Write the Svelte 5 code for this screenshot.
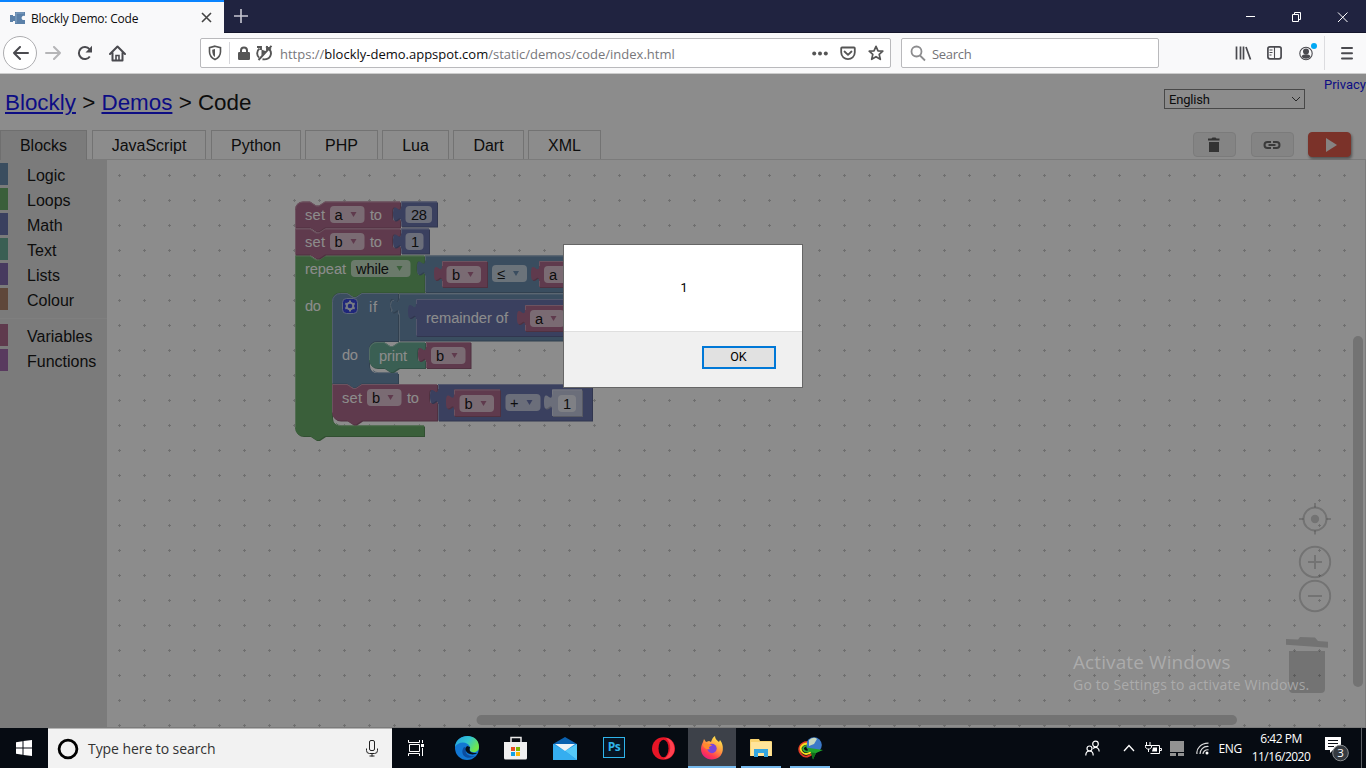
<script>
  const C = { logic: '#5b80a5', loops: '#5ba55b', math: '#5b67a5', text: '#5ba58c', vars: '#a55b80', shadow: '#bdc2db' };
  const dark = { logic: '#496684', loops: '#498449', math: '#495284', text: '#498470', vars: '#844966', shadow: '#979baf' };
  const light = { logic: '#8ca6c0', loops: '#8cc08c', math: '#8c95c0', text: '#8cc0ae', vars: '#c08ca6', shadow: '#d1d4e6' };

  const categories = [
    ['Logic', '#5b80a5'], ['Loops', '#5ba55b'], ['Math', '#5b67a5'], ['Text', '#5ba58c'],
    ['Lists', '#745ba5'], ['Colour', '#a5745b'], null, ['Variables', '#a55b80'], ['Functions', '#995ba5']
  ];
  const tabs = [['Blocks', 87], ['JavaScript', 114], ['Python', 90], ['PHP', 73], ['Lua', 67], ['Dart', 71], ['XML', 73]];
  const tabGaps = [0, 5, 5, 4, 4, 4, 4];

  const notch = 'l6,4 3,0 6,-4';
  const back = 'l-6,4 -3,0 -6,-4';
  const socket = 'v5c0,10 -8,-8 -8,7.5s8,-2.5 8,7.5';
  const plug = 'V{y}c0,-10 -8,8 -8,-7.5s8,2.5 8,-7.5';

  // Value block with an output plug on its left side.
  const value = (k, x, y, r, b) => ({
    k, d: `M${x},${y}H${r}V${b}H${x}${plug.replace('{y}', y + 20)}Z`,
    l: `M${x + .5},${b - .5}V${y + 20}M${x + .5},${y + 5}V${y + .5}H${r}`
  });
  // Statement block with notches above and below and one value socket.
  const statement = (k, x, y, r, b, round, roundB) => ({
    k, d: `M${x},${y + (round ? 8 : 0)}${round ? 'a8,8 0 0 1 8,-8' : ''}H${x + 15}${notch}H${r}${socket}V${b}H${x + 30}${back}H${x + (roundB ? 8 : 0)}${roundB ? 'a8,8 0 0 1 -8,-8' : ''}Z`,
    l: `M${x + .5},${b - (roundB ? 8 : 0)}V${y + (round ? 8 : .5)}${round ? 'a7.5,7.5 0 0 1 7.5,-7.5' : ''}H${x + 15}${notch}H${r}`
  });

  const blocks = [
    { k: 'loops', d: `M295,256H310${notch}H424.5${socket}V293H362${back}H340a8,8 0 0 0 -8,8V418a8,8 0 0 0 8,8H424V436.5H325${back}H303a8,8 0 0 1 -8,-8Z`,
      l: 'M295.5,428V256.5H310l6,4 3,0 6,-4H424M336,424q2,2 5,2.2H424' },
    statement('vars', 295, 202, 400, 228, true, false),
    value('math', 401, 202, 437, 227),
    statement('vars', 295, 229, 400, 255, false, false),
    value('math', 401, 229, 429, 254),
    value('logic', 425, 256, 640, 292.5),
    value('vars', 442, 261.5, 487, 287.5),
    value('vars', 539, 261.5, 585, 287.5),
    { k: 'logic', d: `M332,301.5a8,8 0 0 1 8,-8H347${notch}H398${socket}V341.5H377a8,8 0 0 0 -8,8V365.5a8,8 0 0 0 8,8H398V384H362${back}H332Z`,
      l: 'M332.5,384V302a8,8 0 0 1 8,-8H347l6,4 3,0 6,-4H398M373,371q2,2 5,2.2H398' },
    value('logic', 399, 294, 700, 341),
    value('math', 416, 299.5, 680, 336.5),
    value('vars', 525, 305.5, 571, 331.5),
    statement('text', 369, 342.5, 425, 368.5, true, true),
    value('vars', 426, 342.5, 470.5, 368.5),
    statement('vars', 332, 384.5, 437, 421, false, true),
    value('math', 438, 384.5, 592, 421),
    value('vars', 454, 390, 500, 416.5),
    value('shadow', 552, 390, 582, 416.5)
  ];

  const labels = [
    ['set', 305, 220, 20], ['to', 370, 220, 12], ['set', 305, 247, 20], ['to', 370, 247, 12],
    ['repeat', 305, 274, 41], ['do', 305, 311, 16], ['if', 369, 312, 8], ['remainder of', 426, 323, 82],
    ['do', 342, 360, 16], ['print', 379, 361, 28], ['set', 342, 403, 20], ['to', 407, 403, 12]
  ];
  // text, field x, y, width, text x, text width, arrow x, arrow colour
  const fields = [
    ['a', 330, 206, 34.5, 334.5, 8, 353.5, 'vars'], ['28', 405.5, 206, 26.5, 411, 16],
    ['b', 330, 233, 34.5, 334.5, 8, 353.5, 'vars'], ['1', 405.5, 233, 18, 411, 8],
    ['while', 351, 260, 59.5, 356, 33, 399.5, 'loops'],
    ['b', 446.5, 266, 34.5, 452, 8, 470.5, 'vars'], ['≤', 492, 265, 35, 497, 8, 516, 'logic'], ['a', 544, 266, 34.5, 549, 8, 568, 'vars'],
    ['a', 530, 310, 34.5, 535, 8, 553.5, 'vars'],
    ['b', 431, 347, 34.5, 436, 8, 454.5, 'vars'],
    ['b', 367, 389, 34.5, 372, 8, 390.5, 'vars'],
    ['b', 459.5, 395, 34.5, 464.5, 8, 483.5, 'vars'], ['+', 505.5, 394, 35, 510, 9, 529.5, 'math'], ['1', 558, 395, 18, 563, 8]
  ];
</script>

<div class="screen">
  <div class="titlebar">
    <div class="tab">
      <svg width="17" height="16" viewBox="0 0 17 16"><path d="M6 2h10v4c-4-2-5 5 0 4v4H6v-3H4v1H1V5h3v1h2z" fill="#5b80a8"/><path d="M7 3h8M7 3v10" stroke="#86a5c5"/></svg>
      <span>Blockly Demo: Code</span>
      <svg class="close" width="11" height="11" viewBox="0 0 11 11"><path d="M1 1l9 9M10 1l-9 9" stroke="#444" stroke-width="1.6"/></svg>
    </div>
    <svg class="plus" width="14" height="14" viewBox="0 0 14 14"><path d="M7 0v14M0 7h14" stroke="#c7c8d2" stroke-width="1.6"/></svg>
    <svg class="wincontrols" width="106" height="12" viewBox="0 0 106 12" fill="none" stroke="#fff">
      <path d="M1 4.5h9M47.500 2.500h6v7h-6zM49.500 2.500v-2h6v7h-2M93 .5l9.500 9.500M102.500 .5l-9.500 9.500" />
    </svg>
  </div>

  <div class="navbar">
    <div class="backbtn"><svg width="17" height="14" viewBox="0 0 17 14" fill="none" stroke="#4a4a4f" stroke-width="2"><path d="M16 7H2M8 1L2 7l6 6" stroke-linejoin="round" stroke-linecap="round"/></svg></div>
    <svg class="fwd" width="17" height="14" viewBox="0 0 17 14" fill="none" stroke="#b5b5b7" stroke-width="2"><path d="M1 7h14M9 1l6 6-6 6" stroke-linejoin="round" stroke-linecap="round"/></svg>
    <svg class="reload" width="16" height="16" viewBox="0 0 16 16" fill="none" stroke="#4a4a4f" stroke-width="2"><path d="M12.8 11.5A6 6 0 1 1 12.5 4.2"/><path d="M15 .8v6.7H8.5z" fill="#4a4a4f" stroke="none"/></svg>
    <svg class="home" width="17" height="17" viewBox="0 0 17 17" fill="none" stroke="#4a4a4f" stroke-width="2"><path d="M1 9l7.5-7.5L16 9M3.5 8v7.5h10V8" stroke-linejoin="round" stroke-linecap="round"/><path d="M7 15v-4.500h3V15" stroke-width="1.600"/></svg>

    <div class="urlbar">
      <svg width="14" height="16" viewBox="0 0 14 16"><path d="M7 1.200l5.500 1.500v4c0 4-2.200 6.200-5.500 7.800C3.700 12.900 1.500 10.700 1.500 6.700v-4z" fill="none" stroke="#555" stroke-width="1.600"/><path d="M7 4v8C5 10.800 4.200 9 4.200 4.800z" fill="#555"/></svg>
      <i class="sep"></i>
      <svg width="12" height="15" viewBox="0 0 12 15"><path d="M3 7V4.500a3 3 0 0 1 6 0V7" fill="none" stroke="#555" stroke-width="2"/><rect y="6" width="12" height="8" rx="1.200" fill="#555"/></svg>
      <svg class="blocked" width="17" height="16" viewBox="0 0 17 16" fill="none" stroke="#555" stroke-width="1.900"><path d="M1 2h4v3M3.500 3.500C0 6.500 1 11 3 12.500M6.500 14.200c8 1.300 10.500-6 6.500-10.200M15.500.8L2.500 15M10 1.500l5 3M11 5V1"/><path d="M5.500 4.500v6l5-4z" fill="#555" stroke="none"/></svg>
      <span class="url">https://<b>blockly-demo.appspot.com</b>/static/demos/code/index.html</span>
      <svg class="dots" width="16" height="5" viewBox="0 0 16 5" fill="#555"><circle cx="2.200" cy="2.500" r="2"/><circle cx="8" cy="2.500" r="2"/><circle cx="13.800" cy="2.500" r="2"/></svg>
      <svg width="16" height="15" viewBox="0 0 16 15" fill="none" stroke="#555" stroke-width="1.800"><path d="M2 1.500h12q.8 0 .8.800v4c0 9-13.600 9-13.600 0v-4q0-.8.800-.8zM4.500 5.500L8 8.800l3.500-3.300" stroke-linecap="round" stroke-linejoin="round"/></svg>
      <svg width="16" height="16" viewBox="0 0 16 16" fill="none" stroke="#555" stroke-width="1.700"><path d="M8 1.300l2 4.500 4.800.4-3.600 3.200 1.100 4.900L8 11.700l-4.300 2.600 1.100-4.900L1.200 6.200 6 5.800z" stroke-linejoin="round"/></svg>
    </div>

    <div class="searchbar">
      <svg width="16" height="17" viewBox="0 0 16 17" fill="none" stroke="#8c8c8e" stroke-width="1.800"><circle cx="6.500" cy="6.500" r="5"/><path d="M10 10.500l5 5"/></svg>
      <span>Search</span>
    </div>

    <svg class="tools" width="122" height="34" viewBox="0 0 122 34" fill="none" stroke="#4a4a4f" stroke-width="1.700">
      <path d="M1.500 10.500v13M5.500 10.500v13M8.500 10.500v13M11 11l4.500 12.500"/>
      <rect x="32.900" y="10.800" width="13.200" height="12" rx="2"/><path d="M39.500 11v12M34.500 14h3M34.500 16.500h3M34.500 19h2" stroke-width="1.100"/>
      <circle cx="71" cy="17.500" r="6.200" stroke-width="1.100"/><circle cx="71" cy="15.500" r="3" fill="#4a4a4f" stroke="none"/><path d="M66.500 20.500c1-3 8-3 9 0-2 3-7 3-9 0z" fill="#4a4a4f" stroke="none"/>
      <circle cx="79" cy="10" r="3" fill="#00a8f4" stroke="none"/>
      <path d="M89.500 0v34" stroke="#dcdcdf" stroke-width="1"/>
      <path d="M107 12h10M107 17.300h10M107 22.600h10" stroke-width="2" stroke-linecap="round"/>
    </svg>
  </div>

  <div class="page">
    <header>
      <h1><a href="#blockly">Blockly</a> &gt; <a href="#demos">Demos</a> &gt; <span>Code</span></h1>
      <div class="select"><span>English</span><svg width="10" height="7" viewBox="0 0 10 7"><path d="M1 1l4 4 4-4" fill="none" stroke="#333"/></svg></div>
      <a class="privacy" href="#privacy">Privacy</a>
    </header>

    <div class="tabrow">
      {#each tabs as [name, w], i}
        <div class="codetab" class:on={i === 0} style:width="{w}px" style:margin-left="{tabGaps[i]}px">{name}</div>
      {/each}
      <div class="actions">
        <div class="btn"><svg width="12" height="16" viewBox="0 0 12 16"><path d="M1 5h10v10H1zM0 1.500h3.500l1-1h3l1 1H11.500v2H0z" fill="#4c4c4c"/></svg></div>
        <div class="btn"><svg width="18" height="10" viewBox="0 0 18 10" fill="none" stroke="#5a5a5a" stroke-width="2"><path d="M8 2H4.500a3 3 0 0 0 0 6H8M10 2h3.500a3 3 0 0 1 0 6H10M5.500 5h7"/></svg></div>
        <div class="btn run"><svg width="12" height="14" viewBox="0 0 12 14"><path d="M1 0l11 7-11 7z" fill="#f3eceb"/></svg></div>
      </div>
    </div>

    <div class="work">
      <aside>
        {#each categories as c}
          {#if c}
            <div class="cat"><i style:background={c[1]}></i>{c[0]}</div>
          {:else}
            <hr />
          {/if}
        {/each}
      </aside>
      <svg class="canvas" width="1259" height="568" viewBox="107 160 1259 568">
        <defs>
          <pattern id="grid" x="107" y="163" width="25" height="25" patternUnits="userSpaceOnUse">
            <path d="M11 12.500h3M12.500 11v3" stroke="#c4c4c4" />
          </pattern>
        </defs>
        <rect x="107" y="160" width="1259" height="568" fill="#fff" />
        <rect x="107" y="160" width="1259" height="568" fill="url(#grid)" />
        <path d="M1365.500 160v568M107 727.500h1259" stroke="#ddd" />

        <g transform="translate(0,-.5)">
          {#each blocks as b}
            <path d={b.d} fill={dark[b.k]} transform="translate(1,1)" />
            <path d={b.d} fill={C[b.k]} />
            <path d={b.l} fill="none" stroke={light[b.k]} />
          {/each}
          <path d="M394 301q-3.500-.5-3.500 5q0 4 2.500 5M398.500 311v4" fill="none" stroke={light.logic} />
        </g>

        <g class="blocktext">
          {#each labels as [t, x, y, w]}
            <text {x} {y} textLength={w} fill="#fff">{t}</text>
          {/each}
          {#each fields as [t, x, y, w, tx, tw, ax, ac]}
            <rect {x} {y} width={w} height="17" rx="4" fill="#fff" opacity=".6" />
            <text x={tx} y={y + 14} textLength={tw} fill="#000">{t}</text>
            {#if ac}<path d="M{ax - 3} {y + 6}h6l-3 5z" fill={C[ac]} />{/if}
          {/each}
        </g>

        <g transform="translate(342,298)">
          <rect x=".5" y=".5" width="15" height="15" rx="4" fill="#2433db" stroke="#a5b6dc" />
          <circle cx="8" cy="8" r="3.300" fill="none" stroke="#d5dced" stroke-width="2" />
          <path d="M8 2.600v2M8 11.400v2M3.300 5.300l1.700 1M11 9.700l1.700 1M3.300 10.700l1.700-1M11 6.300l1.700-1" stroke="#d5dced" stroke-width="2" />
        </g>

        <g fill="none" stroke="#000" stroke-opacity=".2" stroke-width="2">
          <circle cx="1315" cy="519" r="11.500" /><circle cx="1315" cy="519" r="4.200" fill="#000" fill-opacity=".2" stroke="none" />
          <path d="M1315 503v4.500M1315 530.500v4M1299 519h4.500M1326.500 519h4.500" />
          <circle cx="1315" cy="562" r="15.200" /><path d="M1308 562h14M1315 555v6M1315 563v6" />
          <circle cx="1315" cy="596" r="15.200" /><path d="M1308 596h14" />
        </g>
        <path d="M1289 651h36v38q0 4-4 4h-28q-4 0-4-4zM1286 639l12 .6 2-2.600 15 .6 3 3.400 10 .8v6l-42-3z" fill="#000" opacity=".2" />
        <rect x="476.500" y="715" width="760.500" height="10" rx="5" fill="#ccc" />
        <rect x="1353" y="336" width="10" height="351" rx="5" fill="#ccc" />
      </svg>
    </div>

    <div class="veil"></div>
    <div class="watermark"><p>Activate Windows</p><p>Go to Settings to activate Windows.</p></div>
    <div class="dialog">
      <div class="msg">1</div>
      <div class="foot"><button>OK</button></div>
    </div>
  </div>

  <div class="taskbar">
    <div class="start"><svg width="16" height="16" viewBox="0 0 16 16"><path d="M0 2.200l6.500-1v6.300H0zM7.500 1L16 0v7.500H7.500zM0 8.500h6.500v6.300l-6.500-1zM7.500 8.500H16V16l-8.500-1z" fill="#fff"/></svg></div>
    <div class="tsearch">
      <svg width="22" height="22" viewBox="0 0 22 22"><circle cx="11" cy="11" r="8.900" fill="none" stroke="#000" stroke-width="2.800"/></svg>
      <span>Type here to search</span>
      <svg class="mic" width="12" height="17" viewBox="0 0 12 17" fill="none" stroke="#222"><rect x="3.500" y=".5" width="5" height="10" rx="1.500"/><path d="M.5 8.500v2q0 3 3 3h5q3 0 3-3v-2M6 13.500v3M3.500 16h5"/></svg>
    </div>
    <div class="app tv"><svg width="17" height="16" viewBox="0 0 17 16" fill="none" stroke="#fff"><path d="M.5 0v2.500h11V0M.5 16v-2.500h11V16M1.500 4.500h10v7h-10zM14.500 0v3M14.500 8v8"/><rect x="13.500" y="4.500" width="2" height="2" fill="#fff"/></svg></div>
    <div class="app"><svg width="24" height="24" viewBox="0 0 24 24">
      <defs><linearGradient id="eg" x1="0" y1="0" x2="1" y2=".5"><stop offset="0" stop-color="#249fe1"/><stop offset=".55" stop-color="#32c6d0"/><stop offset="1" stop-color="#70e84a"/></linearGradient></defs>
      <circle cx="12" cy="12" r="12" fill="#1277d3"/><path d="M0 11C1-3 24-4 24 11c0 6-7 6-9 4-2-1 1-2 0-4C13 5 3 5 0 11z" fill="url(#eg)"/><path d="M9 11c-5 7 2 14 11 9-8 1-11-4-8-8z" fill="#0b4da0"/><path d="M12 10c-3 3-1 7 3 8 3 1 6 0 7-1-2 0-9 1-7-6z" fill="#071019"/></svg></div>
    <div class="app"><svg width="24" height="24" viewBox="0 0 24 24"><path d="M7 7V1.500h10V7" fill="none" stroke="#e9e9e9" stroke-width="1.500"/><path d="M0 6h23v16q0 1.500-1.500 1.500h-20Q0 23.500 0 22z" fill="#f0f0f0"/><path d="M7 11h4v4H7z" fill="#e94f23"/><path d="M12 11h4v4h-4z" fill="#7eb900"/><path d="M7 16h4v4H7z" fill="#12a3e5"/><path d="M12 16h4v4h-4z" fill="#fbb707"/></svg></div>
    <div class="app"><svg width="24" height="23" viewBox="0 0 24 23"><path d="M0 7l12-7 12 7v15H0z" fill="#0b62b0"/><path d="M0 7v16h24V7z" fill="#2194e1"/><path d="M24 7v16L12 14z" fill="#54c9f8"/><path d="M0 7v16h24L12 14z" fill="#35aef0"/><path d="M2 7h20l-10 7z" fill="#f0f4f7"/></svg></div>
    <div class="app"><div class="ps">Ps</div></div>
    <div class="app"><svg width="23" height="23" viewBox="0 0 23 23"><ellipse cx="11.500" cy="11.500" rx="11.500" ry="11.300" fill="#e81526"/><path d="M14 1c8 1 9 10 8 14-2 5-6 7-10 7 8-5 8-16 2-21z" fill="#ff4150"/><ellipse cx="11.500" cy="11.500" rx="5" ry="8.700" fill="#060b12"/></svg></div>
    <div class="app active"><svg width="24" height="24" viewBox="0 0 24 24">
      <defs><linearGradient id="ff" x1=".8" y1="0" x2=".2" y2="1"><stop offset="0" stop-color="#fff14f"/><stop offset=".45" stop-color="#ff9640"/><stop offset=".75" stop-color="#ff3a50"/><stop offset="1" stop-color="#e31587"/></linearGradient></defs>
      <path d="M15 0c0 3 2 4 4 6l1-2c3 4 3 7 2.800 10-.8 6-5 9.500-11 9.500S1 19 1 13c0-3 1-5 2-7l1-3 2 3 3-1 2 1c1-3 2-5 4-6z" fill="url(#ff)"/><circle cx="12" cy="12.500" r="4.700" fill="#7b45d9"/><path d="M3 8c4-1 8 0 9 2-3 0-4 2-2 3-3 1-7-1-7-5z" fill="#ff8b2d"/></svg></div>
    <div class="app line"><svg width="22" height="20" viewBox="0 0 22 20"><path d="M0 1.500Q0 1 1 1h8l1 2h11q1 0 1 1v14H0z" fill="#f9d36e"/><path d="M1 4h20.500v14H1z" fill="#ffe49a"/><path d="M4 19v-8h14v8h-4v-4H8v4z" fill="#35a6e0"/></svg></div>
    <div class="app line"><svg width="25" height="23" viewBox="0 0 25 23"><circle cx="16" cy="8" r="7.800" fill="#3b79c8"/><path d="M11 3q5-4 8-1l-3 5-5 2z" fill="#c7d8c0"/><g fill="none" stroke-width="1.800"><path d="M9 5C2 6-1 12 3 17s9 2 12-1" stroke="#e33b25"/><path d="M9 6.500c-6 1-8 5-5 8.500s7 2 10-1" stroke="#f7df21"/><path d="M9 8.500c-4 1-5 3-3 5s5 1 7-1" stroke="#36ad32"/></g><path d="M8 10.500l17 2.500-7 3-3 6.500-2-7z" fill="#1fa52a"/><path d="M13 15.500l5 .5-3 6.500z" fill="#0f6d1b"/></svg></div>

    <div class="tray">
      <svg class="people" width="15" height="16" viewBox="0 0 15 16" fill="none" stroke="#fff" stroke-width="1.200"><circle cx="10.500" cy="4" r="2.800"/><circle cx="4.500" cy="8.500" r="2.500"/><path d="M.8 15.500c0-6 7.400-6 7.400 0M8 8.500c3-2.500 6.200-.5 6.200 3"/></svg>
      <svg class="chev" width="12" height="8" viewBox="0 0 12 8"><path d="M1 7l5-5.500L11 7" fill="none" stroke="#fff" stroke-width="1.300"/></svg>
      <svg width="17" height="13" viewBox="0 0 17 13" fill="none" stroke="#fff"><path d="M6.500 3.500h8v8h-9M15 6.500h1.500v2H15"/><path d="M1.500 0v3M5 0v3M0 3.500h6.500v2L4.500 7h-2L.5 5.500zM3.500 7v3"/><path d="M8 5.500h4v4H7z" fill="#fff" stroke="none"/></svg>
      <svg width="14" height="15" viewBox="0 0 14 15"><path d="M0 0h14v11H0zM0 12h6v3H0zM8 12h6v3H8z" fill="#929292"/></svg>
      <svg width="13" height="13" viewBox="0 0 13 13" fill="none" stroke="#ddd" stroke-width="1.200"><path d="M1 12C0 7 5 1 12.500 1.200M4 12c0-4 3-8 8.500-7.500M7 12c0-2 2-4.500 5.500-4.200"/><circle cx="11" cy="11" r="1.500" fill="#fff" stroke="none"/></svg>
      <span class="lang">ENG</span>
      <div class="clock"><span>6:42 PM</span><span>11/16/2020</span></div>
      <svg class="notif" width="26" height="26" viewBox="0 0 26 26"><path d="M0 0h16v13H8l-3 3v-3H0z" fill="#fff"/><path d="M3 3.500h10M3 6.500h10M3 9.500h6" stroke="#0a0f16"/><circle cx="15.500" cy="16" r="7.800" fill="#353a40" stroke="#8a8d90"/><text x="15.500" y="20" text-anchor="middle" font-size="11.500" fill="#fff">3</text></svg>
      <i class="edge"></i>
    </div>
  </div>
</div>

<style>
  :global(body) { margin: 0; overflow: hidden; }
  .screen { width: 1366px; height: 768px; display: flex; flex-direction: column; overflow: hidden; font-family: "Open Sans", "Noto Sans", sans-serif; }
  svg { display: block; flex: none; }

  .titlebar { height: 33px; flex: none; background: #202340; display: flex; align-items: center; box-sizing: border-box; border-bottom: 1px solid #14162c; }
  .tab { width: 224px; height: 33px; margin-bottom: -1px; background: #f9f9fa; border-top: 2px solid #0a84ff; box-sizing: border-box; display: flex; align-items: center; padding: 0 12px 0 9px; font-size: 12px; letter-spacing: -.22px; color: #0c0c0d; }
  .tab span { margin-left: 5px; white-space: nowrap; padding-top: 1px; }
  .close { margin-left: auto; }
  .plus { margin-left: 10px; }
  .wincontrols { margin-left: auto; margin-right: 15px; margin-top: 3px; }

  .navbar { height: 41px; flex: none; box-sizing: border-box; background: #f9f9fa; border-bottom: 1px solid #ccc; display: flex; align-items: center; padding-left: 3px; }
  .backbtn { width: 34px; height: 34px; box-sizing: border-box; border: 1px solid #adadb0; border-radius: 50%; background: #fff; display: flex; align-items: center; justify-content: center; }
  .fwd { margin-left: 8px; }
  .reload { margin-left: 15px; }
  .home { margin-left: 16px; }
  .urlbar { width: 691px; height: 30px; box-sizing: border-box; margin-left: 74px; border: 1px solid #b9b9bc; border-radius: 2px; background: #fff; display: flex; align-items: center; padding: 0 6px 0 7px; }
  .sep { width: 1px; height: 22px; background: #d7d7db; margin: 0 8px 0 7px; }
  .blocked { margin-left: 6px; }
  .url { font-size: 13px; color: #77777b; margin-left: 7px; white-space: nowrap; letter-spacing: 0; padding-top: 1px; }
  .url b { font-weight: 400; color: #0c0c0d; }
  .dots { margin-left: auto; }
  .dots + svg { margin: 0 12px; }
  .searchbar { width: 258px; height: 30px; box-sizing: border-box; margin-left: 10px; border: 1px solid #b9b9bc; border-radius: 2px; background: #fff; display: flex; align-items: center; padding-left: 8px; font-size: 13px; color: #737377; letter-spacing: -.3px; }
  .searchbar span { margin-left: 6px; padding-top: 2px; }
  .tools { margin-left: auto; margin-right: 9px; }

  .page { height: 654px; flex: none; position: relative; background: #fff; font-family: "Liberation Sans", Arial, sans-serif; font-size: 16px; color: #000; display: flex; flex-direction: column; }
  header { height: 56px; flex: none; display: flex; align-items: flex-start; }
  h1 { margin: 16px 0 0 5px; font-size: 22.400px; line-height: 26px; font-weight: 400; white-space: nowrap; }
  a { color: #00e; }
  .select { margin: 15px 0 0 auto; width: 141px; height: 20px; box-sizing: border-box; border: 1px solid #767676; display: flex; align-items: center; justify-content: space-between; padding: 0 3px 0 4px; font: 13px Roboto, sans-serif; letter-spacing: -.2px; }
  .privacy { margin: 2px 0 0 19px; width: 42px; font: 13px/18px Roboto, sans-serif; text-decoration: none; white-space: nowrap; }
  .tabrow { height: 30px; flex: none; display: flex; box-sizing: border-box; border-bottom: 1px solid #ddd; }
  .codetab { box-sizing: border-box; height: 29px; border: 1px solid #ccc; border-bottom: 0; text-align: center; line-height: 29px; }
  .codetab.on { background: #ddd; height: 30px; border-color: #c4c4c4; }
  .actions { margin-left: auto; display: flex; padding: 2px 15px 0 0; }
  .btn { width: 43px; height: 25px; box-sizing: border-box; border: 1px solid #ddd; border-radius: 4px; background: #eee; display: flex; align-items: center; justify-content: center; margin-left: 15px; }
  .btn svg { margin-right: 1px; }
  .btn.run { margin-left: 14px; background: #dd4b39; border-color: #dd4b39; box-shadow: 1px 2px 3px #888; }
  .btn.run svg { margin: 0 0 0 2px; }
  .work { flex: 1; display: flex; min-height: 0; }
  aside { width: 107px; flex: none; background: #ddd; padding-top: 3px; box-sizing: border-box; }
  .cat { height: 22px; margin-bottom: 3px; display: flex; line-height: 25px; }
  .cat i { width: 8px; margin-right: 19px; }
  .cat:has(+ hr) { margin-bottom: 8px; }
  hr { border: 0; border-top: 1px solid #e5e5e5; height: 0; margin: 0 0 5px; }
  .blocktext { font-family: "Liberation Sans", Arial, sans-serif; font-size: 14.670px; }
  .veil { position: absolute; inset: 0; background: rgba(26, 26, 26, .5); }
  .watermark { position: absolute; left: 1073px; top: 576px; color: rgba(182, 182, 182, .75); font-family: "Open Sans", sans-serif; white-space: nowrap; }
  .watermark p { margin: 0; font-size: 19px; line-height: 25px; letter-spacing: .1px; }
  .watermark p + p { font-size: 14px; line-height: 19px; letter-spacing: .2px; }

  .dialog { position: absolute; left: 563px; top: 170px; width: 240px; height: 144px; box-sizing: border-box; border: 1px solid #666; background: #f0f0f0; display: flex; flex-direction: column; font: 12.500px Roboto, sans-serif; }
  .msg { height: 86px; background: #fff; border-bottom: 1px solid #dfdfdf; text-align: center; line-height: 86px; padding-left: 2px; }
  .foot { padding: 14px 26px 0; display: flex; justify-content: flex-end; }
  button { width: 74px; height: 23px; padding: 0 1px 2px 0; border: 2px solid #0078d7; background: #e1e1e1; font: 12.500px/17px Roboto, sans-serif; color: #000; }

  .taskbar { height: 40px; flex: none; background: #060b12; display: flex; color: #fff; }
  .start { width: 48px; display: flex; align-items: center; justify-content: center; }
  .tsearch { width: 344px; box-sizing: border-box; background: #f2f2f2; border-top: 1px solid #b5b5b5; display: flex; align-items: center; padding: 0 14px 0 9px; color: #333; font-size: 14px; letter-spacing: -.07px; }
  .tsearch span { margin-left: 9px; }
  .mic { margin-left: auto; }
  .app { width: 48px; margin-right: 1px; box-sizing: border-box; display: flex; align-items: center; justify-content: center; position: relative; }
  .app.tv { margin-right: 3px; }
  .active { background: #3d4149; box-shadow: inset 0 -2px #76b9ed; }
  .line::after { content: ""; position: absolute; left: 4px; right: 4px; bottom: 0; height: 2px; background: #76b9ed; }
  .ps { width: 22px; height: 21px; box-sizing: border-box; border: 1.500px solid #2fb4ea; color: #2fb4ea; background: #061422; font-size: 12px; font-weight: 700; line-height: 18px; text-align: center; margin-bottom: 2px; letter-spacing: -.5px; }
  .tray { margin-left: auto; display: flex; align-items: center; }
  .people { margin-right: 23px; }
  .chev { margin-right: 10px; }
  .chev + svg { margin-right: 8px; }
  .chev + svg + svg { margin-right: 12px; }
  .lang { font-size: 12px; letter-spacing: -.3px; margin: 0 9px 0 9px; }
  .clock { width: 60px; display: flex; flex-direction: column; align-items: center; font-size: 12px; line-height: 18px; letter-spacing: -.5px; white-space: nowrap; }
  .notif { margin-left: 14px; margin-top: 4px; }
  .edge { width: 1px; height: 40px; background: #5b5f64; margin: 0 4px 0 10px; }
</style>
